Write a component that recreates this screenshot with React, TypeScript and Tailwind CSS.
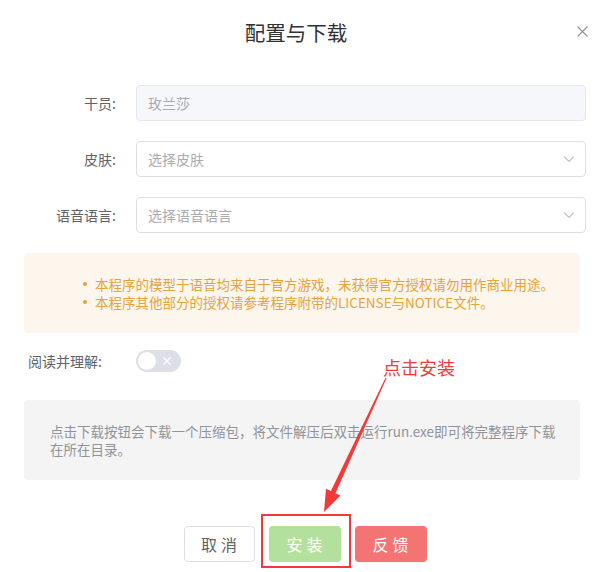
import React from "react";

function Chevron() {
  return (
    <svg width="12" height="8" viewBox="0 0 12 8" fill="none" className="text-[#c0c4cc]">
      <path d="M1 1.5 L6 6.5 L11 1.5" stroke="currentColor" strokeWidth="1.1" />
    </svg>
  );
}

function FormRow({ label, children }: { label: string; children: React.ReactNode }) {
  return (
    <div className="flex items-center h-[36px]">
      <div className="w-[136px] pr-[20px] text-right text-[14px] text-[#606266]">{label}</div>
      {children}
    </div>
  );
}

function SelectBox({ placeholder }: { placeholder: string }) {
  return (
    <div className="flex-1 h-[36px] mr-[18px] flex items-center justify-between border border-[#dcdfe6] rounded-[4px] pl-[11px] pr-[10px] bg-white">
      <span className="text-[14px] text-[#a8abb2]">{placeholder}</span>
      <Chevron />
    </div>
  );
}

export default function App() {
  return (
    <div
      className="relative w-[604px] h-[572px] bg-white overflow-hidden"
      style={{ fontFamily: '"Noto Sans CJK SC", "Noto Sans", sans-serif' }}
    >
      {/* header */}
      <div className="relative h-[85px]">
        <div className="pt-[18px] pr-[12px] text-center text-[20.5px] leading-[28px] text-[#303133]">配置与下载</div>
        <button className="absolute right-[16px] top-[26px] text-[#909399]">
          <svg width="11" height="11" viewBox="0 0 11 11">
            <path d="M0.5 0.5 L10.5 10.5 M10.5 0.5 L0.5 10.5" stroke="currentColor" strokeWidth="1.1" />
          </svg>
        </button>
      </div>

      {/* form */}
      <div className="flex flex-col gap-[20px]">
        <FormRow label="干员:">
          <div className="flex-1 h-[36px] mr-[18px] flex items-center border border-[#e4e7ed] rounded-[4px] pl-[11px] bg-[#f5f7fa]">
            <span className="text-[14px] text-[#a8abb2]">玫兰莎</span>
          </div>
        </FormRow>
        <FormRow label="皮肤:">
          <SelectBox placeholder="选择皮肤" />
        </FormRow>
        <FormRow label="语音语言:">
          <SelectBox placeholder="选择语音语言" />
        </FormRow>
      </div>

      {/* warning */}
      <div className="mx-[24px] mt-[20px] h-[80px] rounded-[4px] bg-[#fdf6ec] flex flex-col justify-center pl-[71px] text-[13.5px] leading-[18px] text-[#e6a23c]">
        <div className="flex items-center">
          <span className="w-[4px] h-[4px] rounded-full bg-[#e6a23c] -ml-[12px] mr-[8px]" />
          本程序的模型于语音均来自于官方游戏，未获得官方授权请勿用作商业用途。
        </div>
        <div className="flex items-center">
          <span className="w-[4px] h-[4px] rounded-full bg-[#e6a23c] -ml-[12px] mr-[8px]" />
          本程序其他部分的授权请参考程序附带的LICENSE与NOTICE文件。
        </div>
      </div>

      {/* switch row */}
      <div className="flex items-center h-[22px] mt-[17px]">
        <div className="w-[136px] pl-[28px] text-[14px] text-[#606266]">阅读并理解:</div>
        <div className="relative w-[45px] h-[22px] rounded-full bg-[#dcdfe6] flex items-center">
          <span className="absolute left-[2px] top-[2px] w-[18px] h-[18px] rounded-full bg-white" />
          <svg width="8" height="8" viewBox="0 0 8 8" className="absolute right-[10px] top-[7px]">
            <path d="M0.5 0.5 L7.5 7.5 M7.5 0.5 L0.5 7.5" stroke="white" strokeWidth="1.2" />
          </svg>
        </div>
      </div>

      {/* info */}
      <div className="mx-[24px] mt-[28px] h-[80px] rounded-[4px] bg-[#f4f4f5] flex items-center pl-[26px] pr-[16px] text-[13.5px] leading-[18px] text-[#909399]">
        <p>点击下载按钮会下载一个压缩包，将文件解压后双击运行run.exe即可将完整程序下载在所在目录。</p>
      </div>

      {/* footer */}
      <div className="flex justify-center items-center gap-[14px] mt-[46px] pl-[6px]">
        <button className="w-[71px] h-[36px] rounded-[4px] border border-[#dcdfe6] bg-white text-[16px] text-[#606266] tracking-[4px] pl-[4px]">
          取消
        </button>
        <button className="w-[72px] h-[36px] rounded-[4px] bg-[#b3e19d] text-[16px] text-white tracking-[4px] pl-[4px]">
          安装
        </button>
        <button className="w-[72px] h-[36px] rounded-[4px] bg-[#f47474] text-[16px] text-white tracking-[4px] pl-[4px]">
          反馈
        </button>
      </div>

      {/* annotation overlay */}
      <div className="absolute left-[261px] top-[514px] w-[90px] h-[54px] border-2 border-[#f23a3a]" />
      <div className="absolute left-[383px] top-[355px] text-[18px] leading-[24px] text-[#f23a3a]">点击安装</div>
      <svg className="absolute left-0 top-0 pointer-events-none" width="604" height="572">
        <polygon
          points="386.5,378.2 335.5,493.2 340.5,495.5 324,512 326,488.7 330.9,491.1 385.5,377.8"
          fill="#f23a3a"
        />
      </svg>
    </div>
  );
}
